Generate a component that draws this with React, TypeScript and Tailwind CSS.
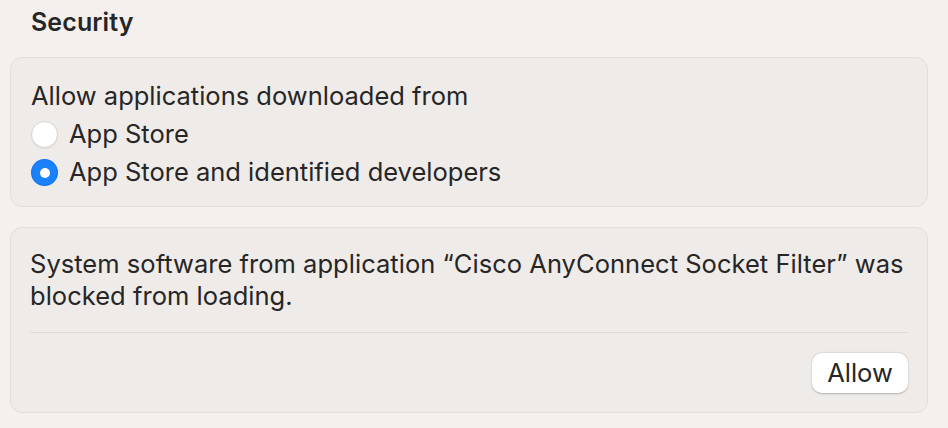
import React from 'react';

function Radio({ checked }: { checked?: boolean }) {
  if (checked) {
    return (
      <span className="w-[27px] h-[27px] rounded-full bg-[#1b80fb] flex items-center justify-center shadow-[inset_0_0_0_1px_rgba(0,90,220,0.25)]">
        <span className="w-[10px] h-[10px] rounded-full bg-white" />
      </span>
    );
  }
  return (
    <span className="w-[27px] h-[27px] rounded-full bg-white border border-[#d6d2cf] shadow-[0_1px_1px_rgba(0,0,0,0.06)]" />
  );
}

export default function App() {
  return (
    <div className="w-[948px] h-[428px] bg-[#f4f0ee] text-[#262626] font-['Inter','Liberation_Sans',sans-serif] overflow-hidden">
      <div className="pl-[10px] pr-[20px] pt-[6px]">
        <h2 className="pl-[21px] text-[25px] font-semibold leading-[32px] tracking-[0.1px]">Security</h2>

        <div className="mt-[19px] h-[150px] rounded-[12px] bg-[#efebe8] border border-[#e2dedb] pl-[20px] pt-[19px]">
          <div className="text-[25.5px] leading-[37px]">Allow applications downloaded from</div>
          <div className="flex items-center gap-[11px] h-[39px] pt-[1px]">
            <Radio />
            <span className="text-[25.5px]">App Store</span>
          </div>
          <div className="flex items-center gap-[11px] h-[39px]">
            <Radio checked />
            <span className="text-[25.5px]">App Store and identified developers</span>
          </div>
        </div>

        <div className="mt-[20px] h-[186px] rounded-[12px] bg-[#efebe8] border border-[#e2dedb] px-[19px] pt-[20px]">
          <p className="text-[25.5px] leading-[32px] tracking-[0.03px]">
            System software from application “Cisco AnyConnect Socket Filter” was blocked from loading.
          </p>
          <div className="mt-[20px] h-px bg-[#dfdbd8]" />
          <div className="flex justify-end mt-[20px]">
            <button className="w-[96px] h-[40px] rounded-[10px] bg-white text-[25.5px] shadow-[0_0.5px_2px_rgba(0,0,0,0.25)]">
              Allow
            </button>
          </div>
        </div>
      </div>
    </div>
  );
}
